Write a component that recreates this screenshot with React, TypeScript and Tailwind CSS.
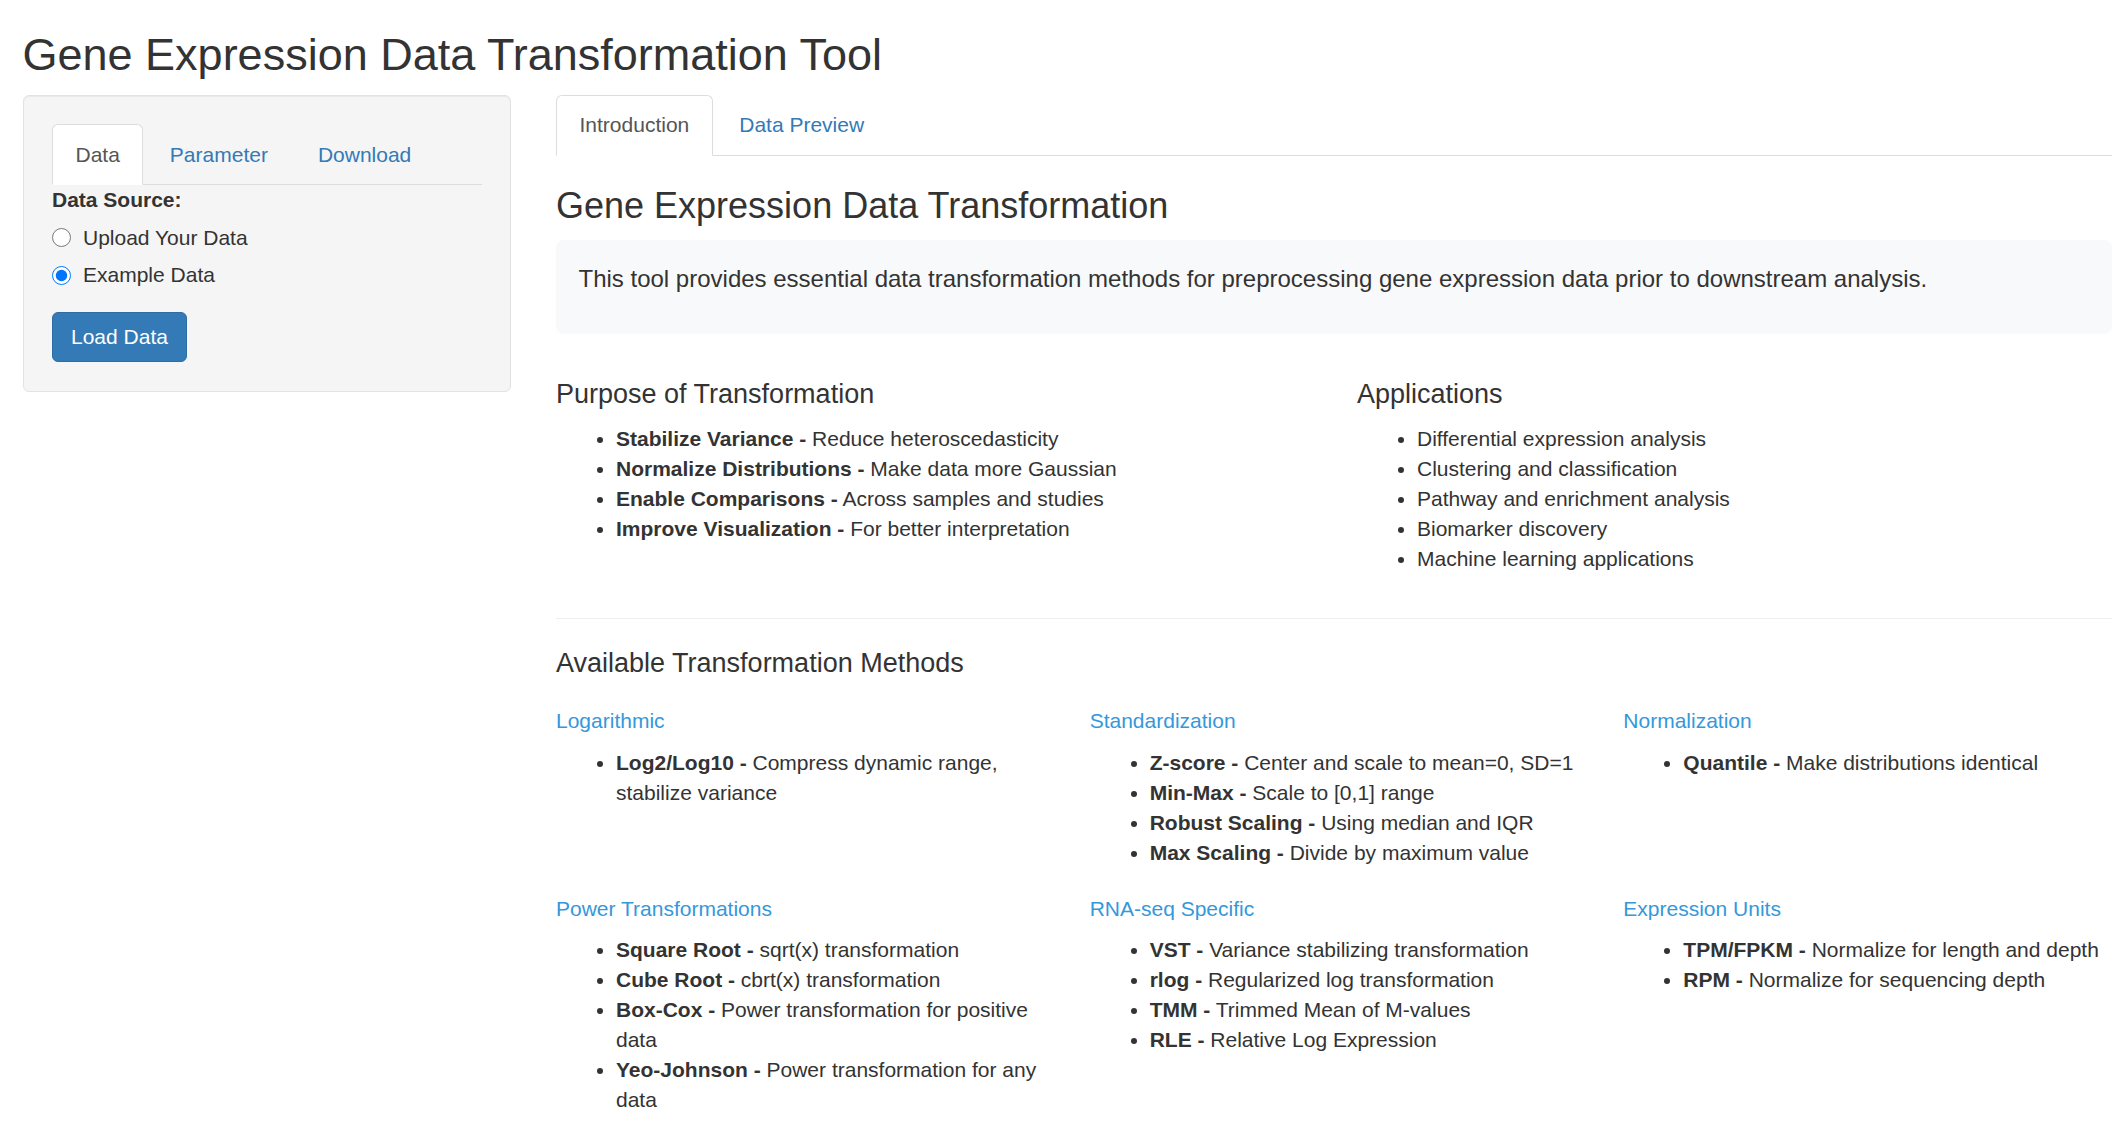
import React from 'react';

type Item = { b: string; t: string };

const purposes: Item[] = [
  { b: 'Stabilize Variance -', t: ' Reduce heteroscedasticity' },
  { b: 'Normalize Distributions -', t: ' Make data more Gaussian' },
  { b: 'Enable Comparisons -', t: ' Across samples and studies' },
  { b: 'Improve Visualization -', t: ' For better interpretation' },
];

const applications = [
  'Differential expression analysis',
  'Clustering and classification',
  'Pathway and enrichment analysis',
  'Biomarker discovery',
  'Machine learning applications',
];

const methodsTop: { title: string; items: Item[] }[] = [
  {
    title: 'Logarithmic',
    items: [{ b: 'Log2/Log10 -', t: ' Compress dynamic range, stabilize variance' }],
  },
  {
    title: 'Standardization',
    items: [
      { b: 'Z-score -', t: ' Center and scale to mean=0, SD=1' },
      { b: 'Min-Max -', t: ' Scale to [0,1] range' },
      { b: 'Robust Scaling -', t: ' Using median and IQR' },
      { b: 'Max Scaling -', t: ' Divide by maximum value' },
    ],
  },
  {
    title: 'Normalization',
    items: [{ b: 'Quantile -', t: ' Make distributions identical' }],
  },
];

const methodsBottom: { title: string; items: Item[] }[] = [
  {
    title: 'Power Transformations',
    items: [
      { b: 'Square Root -', t: ' sqrt(x) transformation' },
      { b: 'Cube Root -', t: ' cbrt(x) transformation' },
      { b: 'Box-Cox -', t: ' Power transformation for positive data' },
      { b: 'Yeo-Johnson -', t: ' Power transformation for any data' },
    ],
  },
  {
    title: 'RNA-seq Specific',
    items: [
      { b: 'VST -', t: ' Variance stabilizing transformation' },
      { b: 'rlog -', t: ' Regularized log transformation' },
      { b: 'TMM -', t: ' Trimmed Mean of M-values' },
      { b: 'RLE -', t: ' Relative Log Expression' },
    ],
  },
  {
    title: 'Expression Units',
    items: [
      { b: 'TPM/FPKM -', t: ' Normalize for length and depth' },
      { b: 'RPM -', t: ' Normalize for sequencing depth' },
    ],
  },
];

function Tabs({ tabs, active }: { tabs: string[]; active: number }) {
  return (
    <ul className="flex border-b border-[#ddd]">
      {tabs.map((t, i) => (
        <li key={t} className="mb-[-1px] mr-[3px]">
          <a
            className={
              i === active
                ? 'block px-[22.5px] py-[14.5px] leading-[30px] border border-[#ddd] border-b-transparent rounded-t-[6px] bg-white text-[#555]'
                : 'block px-[22.5px] py-[14.5px] leading-[30px] border border-transparent rounded-t-[6px] text-[#337ab7]'
            }
          >
            {t}
          </a>
        </li>
      ))}
    </ul>
  );
}

function BulletList({ items }: { items: Item[] }) {
  return (
    <ul className="list-disc pl-[60px] mb-[15px]">
      {items.map((it) => (
        <li key={it.b}>
          <strong className="font-bold">{it.b}</strong>
          {it.t}
        </li>
      ))}
    </ul>
  );
}

function MethodRow({ groups, first }: { groups: { title: string; items: Item[] }[]; first?: boolean }) {
  return (
    <div className="grid grid-cols-3 gap-x-[45px]">
      {groups.map((g) => (
        <div key={g.title}>
          <h5 className={(first ? 'mt-[16px]' : 'mt-[14px]') + ' mb-[15px] text-[21px] leading-[1.1] text-[#3498db]'}>
            {g.title}
          </h5>
          <BulletList items={g.items} />
        </div>
      ))}
    </div>
  );
}

export default function App() {
  return (
    <div
      className="min-h-screen bg-white text-[#333] text-[21px] leading-[30px] pl-[22.5px] overflow-hidden"
      style={{ fontFamily: '"Liberation Sans", Arial, Helvetica, sans-serif' }}
    >
      <h2 className="mt-[30px] mb-[15px] text-[45px] leading-[1.1] font-normal">
        Gene Expression Data Transformation Tool
      </h2>

      <div className="flex">
        {/* sidebar */}
        <div className="w-[511px] shrink-0 pr-[22.5px]">
          <div className="bg-[#f5f5f5] border border-[#e3e3e3] rounded-[6px] p-[28.5px] shadow-[inset_0_1px_1px_rgba(0,0,0,0.05)]">
            <Tabs tabs={['Data', 'Parameter', 'Download']} active={0} />
            <label className="block font-bold mb-[7.5px]">Data Source:</label>
            <div className="flex flex-col gap-[7.5px]">
              <label className="flex items-center h-[30px]">
                <input type="radio" name="src" className="w-[19px] h-[19px] m-0 mr-[12px]" readOnly />
                Upload Your Data
              </label>
              <label className="flex items-center h-[30px]">
                <input type="radio" name="src" className="w-[19px] h-[19px] m-0 mr-[12px]" defaultChecked />
                Example Data
              </label>
            </div>
            <button className="mt-[22px] bg-[#337ab7] border border-[#2e6da4] text-white rounded-[6px] px-[18px] py-[9px] leading-[30px] text-[21px]">
              Load Data
            </button>
          </div>
        </div>

        {/* main panel */}
        <div className="w-[1556px] shrink-0 pl-[22.5px] box-content">
          <Tabs tabs={['Introduction', 'Data Preview']} active={0} />

          <h3 className="mt-[30px] mb-[15px] text-[36px] leading-[1.1] font-normal">
            Gene Expression Data Transformation
          </h3>
          <div className="bg-[#f8f9fa] rounded-[8px] px-[22.5px] pt-[22px] pb-[37.5px]">
            <p className="text-[24px] leading-[34px]">
              This tool provides essential data transformation methods for preprocessing gene expression data prior to
              downstream analysis.
            </p>
          </div>

          <div className="grid grid-cols-[801px_1fr] mt-[46px]">
            <div>
              <h4 className="mb-[15px] text-[27px] leading-[1.1]">Purpose of Transformation</h4>
              <BulletList items={purposes} />
            </div>
            <div>
              <h4 className="mb-[15px] text-[27px] leading-[1.1]">Applications</h4>
              <ul className="list-disc pl-[60px] mb-[15px]">
                {applications.map((a) => (
                  <li key={a}>{a}</li>
                ))}
              </ul>
            </div>
          </div>

          <hr className="mt-[29px] mb-[29.5px] border-0 border-t border-[#eee]" />

          <h4 className="mb-[15px] text-[27px] leading-[1.1]">Available Transformation Methods</h4>
          <MethodRow groups={methodsTop} first />
          <MethodRow groups={methodsBottom} />
        </div>
      </div>
    </div>
  );
}
